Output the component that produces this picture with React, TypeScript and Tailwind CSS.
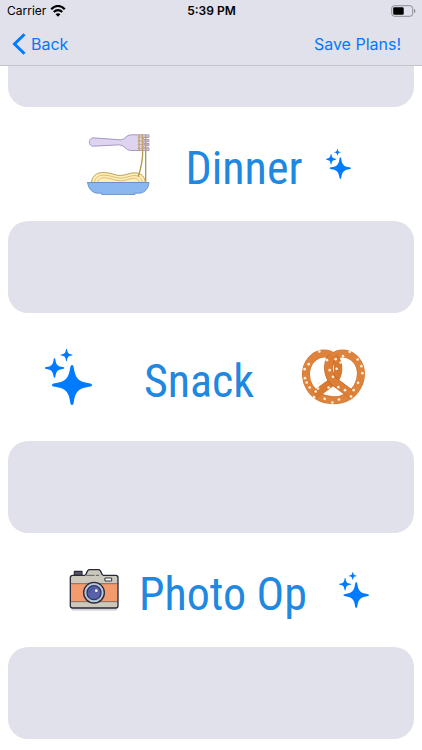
import React from 'react';

interface IconProps {
  className?: string;
}

const STAR =
  'M0-20C1-20 1.5-19.2 1.8-17C3.4-6.5 6.5-3.4 17-1.8C19.2-1.5 20-1 20 0C20 1 19.2 1.5 17 1.8C6.5 3.4 3.4 6.5 1.8 17C1.5 19.2 1 20 0 20C-1 20-1.5 19.2-1.8 17C-3.4 6.5-6.5 3.4-17 1.8C-19.2 1.5-20 1-20 0C-20-1-19.2-1.5-17-1.8C-6.5-3.4-3.4-6.5-1.8-17C-1.5-19.2-1-20 0-20Z';

const Sparkles: React.FC<IconProps> = ({ className }) => (
  <svg viewBox="0 0 47 56" className={className} fill="#007aff" aria-hidden="true">
    <path d={STAR} transform="translate(27 36)" />
    <path d={STAR} transform="translate(9.5 19) scale(0.49)" />
    <path d={STAR} transform="translate(21.5 6) scale(0.31)" />
  </svg>
);

const Spaghetti: React.FC<IconProps> = ({ className }) => (
  <svg viewBox="21 22 189 188" className={className} fill="none" strokeLinecap="round" strokeLinejoin="round" aria-hidden="true">
    {/* fork */}
    <path
      d="M40 36C24 35 24 62 40 61L118 57C134 57 136 74 152 74H207V66H191V60H207V53H191V48H207V41H191V35H207V27H152C138 27 137 41 124 42Z"
      fill="#dfd4f0"
      stroke="#a898c4"
      strokeWidth="3"
    />
    {/* noodles on the plate */}
    <path
      d="M34 169C38 146 54 139 74 140C94 141 106 149 121 149C137 149 149 140 167 141C185 142 194 153 196 169Z"
      fill="#fff0b2"
      stroke="#bda05c"
      strokeWidth="3"
    />
    <path d="M43 169C47 152 59 147 75 148C94 149 106 157 122 157C138 157 149 149 165 149C179 150 185 158 187 169" stroke="#cdb36f" strokeWidth="2.5" />
    <path d="M52 169C56 158 65 155 77 156C94 157 106 165 123 165C139 165 149 157 163 157C172 158 176 162 178 169" stroke="#cdb36f" strokeWidth="2.5" />
    {/* noodles on the fork */}
    <path d="M188 70C189 100 183 127 175 151M197 70V166" stroke="#b7954d" strokeWidth="4" />
    <path d="M177 28V73M187 27V74M197 28V73" stroke="#c5a35d" strokeWidth="4" />
    <path d="M174 34H203M174 45H203M174 56H203M174 68H203" stroke="#b79d7a" strokeWidth="2" />
    {/* bowl */}
    <path d="M23 170H207C206 186 196 200 180 202H165V206H65V202H51C34 200 24 186 23 170Z" fill="#8bb7f0" stroke="#5f8cc8" strokeWidth="2.5" />
  </svg>
);

const SALT = [
  [76, 34], [44, 72], [32, 87], [33, 114], [38, 127], [47, 142], [65, 154], [92, 176],
  [76, 129], [104, 142], [99, 60], [107, 90], [117, 110], [128, 86], [125, 57],
  [140, 67], [167, 35], [191, 58], [202, 78], [205, 99], [192, 128], [179, 150], [171, 169],
  [153, 150], [133, 141], [135, 178], [115, 187], [60, 171], [147, 48], [72, 145],
];

const LOOP =
  'M118 50C103 37 78 36 60 51C32 73 30 112 46 140C62 169 91 180 118 180C146 180 174 169 190 140C206 112 206 73 177 51C158 36 133 37 118 50';
const LEFT_STRAND = 'M120 50C138 72 136 106 116 124L62 164';
const RIGHT_STRAND = 'M114 50C98 72 100 106 120 124L174 164';

const Pretzel: React.FC<IconProps> = ({ className }) => (
  <svg viewBox="24 27 189 167" className={className} fill="none" strokeLinejoin="round" aria-hidden="true">
    <path d={LOOP} stroke="#d67a35" strokeWidth="24" />
    <path d={LOOP} stroke="#dd833c" strokeWidth="20" />
    <path d={LEFT_STRAND} stroke="#d07330" strokeWidth="25" />
    <path d={LEFT_STRAND} stroke="#d97a33" strokeWidth="22" />
    <path d={RIGHT_STRAND} stroke="#c2631f" strokeWidth="26" />
    <path d={RIGHT_STRAND} stroke="#dd7f37" strokeWidth="23" />
    {SALT.map(([x, y]) => (
      <circle key={`${x}-${y}`} cx={x} cy={y} r="4" fill="#fff0dd" />
    ))}
  </svg>
);

const Camera: React.FC<IconProps> = ({ className }) => (
  <svg viewBox="32 33 150 132" className={className} strokeLinecap="round" strokeLinejoin="round" aria-hidden="true">
    <rect x="39" y="151" width="138" height="10" rx="5" fill="#d8d8dc" />
    <path d="M48 55V43H71V55Z" fill="#53536a" stroke="#29293a" strokeWidth="3.5" />
    <path
      d="M43 55H79C86 55 84 38 93 38H121C130 38 128 55 135 55H172Q179 55 179 62V146Q179 153 172 153H43Q36 153 36 146V62Q36 55 43 55Z"
      fill="#ccc9bc"
    />
    <rect x="37" y="80" width="141" height="54" fill="#f39b6d" />
    <path d="M37 80H178M37 134H178" stroke="#594b4c" strokeWidth="2" />
    <path
      d="M43 55H79C86 55 84 38 93 38H121C130 38 128 55 135 55H172Q179 55 179 62V146Q179 153 172 153H43Q36 153 36 146V62Q36 55 43 55Z"
      fill="none"
      stroke="#29293a"
      strokeWidth="4"
    />
    <path d="M85 55H108M114 55H121" stroke="#29293a" strokeWidth="2" />
    <rect x="141" y="63" width="19" height="9" fill="#fff" stroke="#333746" strokeWidth="3" />
    <circle cx="107" cy="107" r="31" fill="#b6c7dc" stroke="#29293a" strokeWidth="4" />
    <circle cx="107" cy="107" r="21" fill="#5961aa" stroke="#30345d" strokeWidth="4" />
    <path d="M94 107A13 13 0 0 1 107 94" fill="none" stroke="#424b91" strokeWidth="3" />
    <circle cx="114" cy="101" r="4" fill="#fff" />
  </svg>
);

const StatusBar = () => (
  <div className="grid grid-cols-3 items-center h-[22px] pl-[7px] pr-[6px] text-[12px] text-black">
    <div className="flex items-center gap-1">
      <span>Carrier</span>
      <svg viewBox="0 0 16 12" className="w-4 h-3" fill="none" stroke="#000" aria-hidden="true">
        <path d="M1.2 4.2C5-.1 11-.1 14.8 4.2" strokeWidth="2.2" />
        <path d="M3.8 7.1C6.3 4.4 9.7 4.4 12.2 7.1" strokeWidth="2.2" />
        <path d="M8 11.7L5.6 9.2C7 7.8 9 7.8 10.4 9.2Z" fill="#000" stroke="none" />
      </svg>
    </div>
    <span className="text-center font-semibold">5:39 PM</span>
    <svg viewBox="0 0 25 12" className="w-[25px] h-3 justify-self-end" aria-hidden="true">
      <rect x="0.7" y="0.7" width="21" height="10.6" rx="2.8" fill="none" stroke="#8d8d94" />
      <rect x="2.2" y="2.2" width="10.5" height="7.6" rx="1.4" fill="#000" />
      <path d="M23 4C24.8 4.5 24.8 7.5 23 8Z" fill="#8d8d94" />
    </svg>
  </div>
);

const NavBar = () => (
  <nav className="flex items-center justify-between h-[43px] pl-3 pr-[21px] text-[16px] text-[#007aff]">
    <button type="button" className="flex items-center gap-[5px]">
      <svg viewBox="0 0 14 22" className="w-[14px] h-[22px]" fill="none" stroke="#007aff" strokeWidth="3" aria-hidden="true">
        <path d="M12.5 1.2L2.5 11L12.5 20.8" />
      </svg>
      Back
    </button>
    <button type="button">Save Plans!</button>
  </nav>
);

const Title: React.FC<{ htmlFor: string; children: React.ReactNode }> = ({ htmlFor, children }) => (
  <label
    htmlFor={htmlFor}
    className="pt-2 font-['Roboto_Condensed','Liberation_Sans_Narrow',sans-serif] text-[46px] leading-[52px] text-[#1f88e0] whitespace-nowrap"
  >
    {children}
  </label>
);

const PlanBox: React.FC<{ id: string; label?: string }> = ({ id, label }) => (
  <textarea
    id={id}
    aria-label={label}
    className="block shrink-0 w-full h-[92px] p-4 rounded-[20px] bg-[#e1e1eb] resize-none outline-none"
  />
);

export default function App() {
  return (
    <div className="min-h-screen bg-white font-['Inter',sans-serif]">
      <header className="relative z-10 bg-[#e1e1eb] border-b border-[#c3c3cb]">
        <StatusBar />
        <NavBar />
      </header>

      <main className="px-2 pb-3">
        {/* earlier plan, scrolled partly under the header */}
        <div className="flex flex-col justify-end h-[41px] overflow-hidden">
          <PlanBox id="lunch" label="Lunch" />
        </div>

        <section>
          <div className="flex items-center justify-center h-[114px] pl-4">
            <Spaghetti className="w-[63px] h-[63px] mr-9" />
            <Title htmlFor="dinner">Dinner</Title>
            <Sparkles className="w-[25px] h-[30px] ml-6" />
          </div>
          <PlanBox id="dinner" />
        </section>

        <section>
          <div className="flex items-center justify-center h-32 pr-3">
            <Sparkles className="w-[47px] h-[56px] mr-[52px]" />
            <Title htmlFor="snack">Snack</Title>
            <Pretzel className="w-[63px] h-[56px] ml-12" />
          </div>
          <PlanBox id="snack" />
        </section>

        <section>
          <div className="flex items-center justify-center h-[114px] pl-4">
            <Camera className="w-[50px] h-[44px] mr-5" />
            <Title htmlFor="photo">Photo Op</Title>
            <Sparkles className="w-[30px] h-[36px] ml-8" />
          </div>
          <PlanBox id="photo" />
        </section>
      </main>
    </div>
  );
}
